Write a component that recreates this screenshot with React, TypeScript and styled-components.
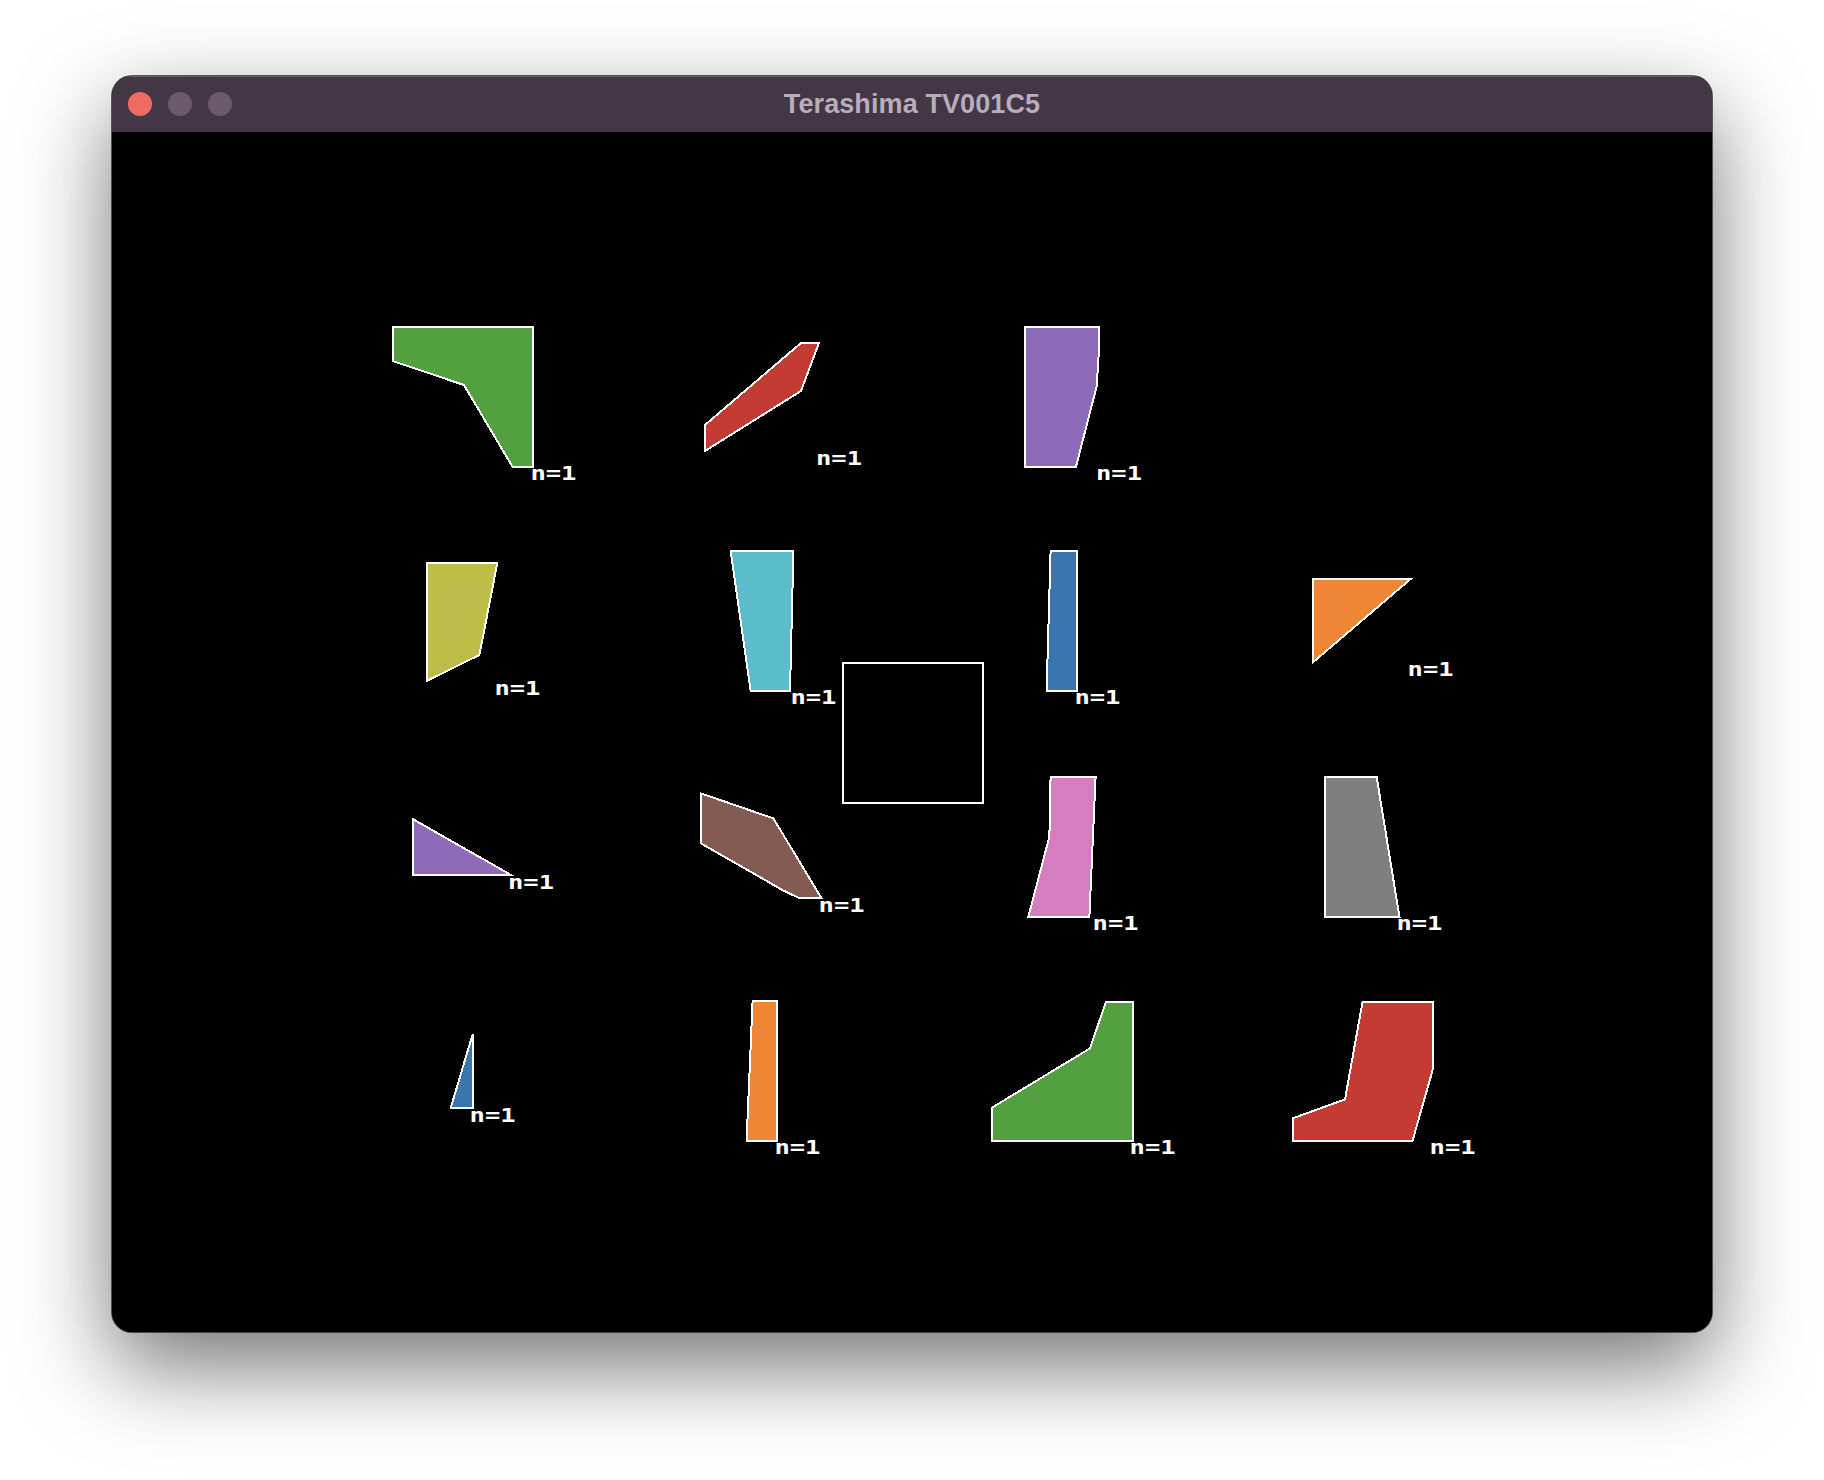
import React from "react";
import styled, { createGlobalStyle } from "styled-components";

type Pt = [number, number];

interface Piece {
  color: string;
  points: Pt[];
}

// coordinates in canvas units (800x600), drawn at 2x
const pieces: Piece[] = [
  { color: "#52a03f", points: [[140.3, 97.3], [210.7, 97.3], [210.7, 167.3], [200.2, 167.3], [176, 126.5], [140.3, 114.5]] },
  { color: "#c43b33", points: [[296.5, 146.5], [344.5, 105.5], [353.5, 105.5], [344.5, 129.5], [296.5, 159.5]] },
  { color: "#8e6bb8", points: [[456.5, 97.3], [493.5, 97.3], [493.3, 112], [492.3, 127.3], [482, 167.3], [456.5, 167.3]] },
  { color: "#bdbd47", points: [[157.3, 215.3], [192.7, 215.3], [183.7, 261.5], [157.3, 274.5]] },
  { color: "#5bbccc", points: [[309.3, 209.5], [340.7, 209.5], [339, 279.3], [319.3, 279.3]] },
  { color: "#3b75af", points: [[469.3, 209.5], [482.7, 209.5], [482.7, 279.3], [467.3, 279.3]] },
  { color: "#ef8636", points: [[600.3, 223.5], [649.3, 223.5], [600.3, 265.3]] },
  { color: "#8e6bb8", points: [[150.3, 343.5], [199.5, 371.5], [150.3, 371.5]] },
  { color: "#845b53", points: [[294.5, 330.7], [330.7, 343.2], [354.8, 383.2], [344, 383.2], [335.7, 379.3], [294.5, 355.7]] },
  { color: "#d57ebf", points: [[469.3, 322.3], [491.8, 322.3], [488.7, 392.3], [458.2, 392.3], [468.7, 352.3]] },
  { color: "#7f7f7f", points: [[606.5, 322.3], [632.3, 322.3], [643.7, 392.3], [606.5, 392.3]] },
  { color: "#3b75af", points: [[180.3, 451.2], [180.3, 488.2], [169.3, 488.2]] },
  { color: "#ef8636", points: [[320.3, 434.5], [332.7, 434.5], [332.7, 504.3], [317.3, 504.3]] },
  { color: "#52a03f", points: [[497, 434.8], [510.3, 434.8], [510.3, 504.3], [440.2, 504.3], [440.2, 487.7], [489, 458.2]] },
  { color: "#c43b33", points: [[625.3, 434.8], [660.3, 434.8], [660.3, 469], [650.3, 504.3], [590.3, 504.3], [590.3, 493.2], [616.5, 483.7]] },
];

const GlobalStyle = createGlobalStyle`
  html, body {
    margin: 0;
    padding: 0;
    background: #ffffff;
  }
`;

const Page = styled.div`
  width: 1824px;
  height: 1480px;
  box-sizing: border-box;
  padding: 76px 112px 0;
  background: #ffffff;
`;

const Window = styled.div`
  width: 1600px;
  display: flex;
  flex-direction: column;
  border-radius: 20px;
  overflow: hidden;
  background: #000;
  box-shadow: 0 0 0 1px rgba(40, 40, 40, 0.75), 0 34px 90px rgba(0, 0, 0, 0.55);
`;

const TitleBar = styled.div`
  height: 56px;
  display: grid;
  grid-template-columns: 1fr auto 1fr;
  align-items: center;
  background: #433645;
  box-shadow: inset 0 1px 0 rgba(255, 255, 255, 0.18);
`;

const Lights = styled.div`
  display: flex;
  gap: 16px;
  padding-left: 16px;
`;

const Light = styled.span<{ $color: string }>`
  width: 24px;
  height: 24px;
  border-radius: 50%;
  background: ${(p) => p.$color};
`;

const Title = styled.div`
  font-family: "Liberation Sans", Arial, sans-serif;
  font-weight: 700;
  font-size: 27px;
  color: #b9adbb;
  letter-spacing: 0.1px;
`;

const Canvas = styled.svg`
  display: block;
  width: 1600px;
  height: 1200px;
  background: #000;
`;

const Shape = styled.polygon`
  stroke: #ffffff;
  stroke-width: 1;
  stroke-linejoin: miter;
`;

const Frame = styled.rect`
  fill: none;
  stroke: #ffffff;
  stroke-width: 1;
`;

const Count = styled.text`
  fill: #ffffff;
  font-family: "DejaVu Sans Mono", "Liberation Mono", monospace;
  font-weight: 700;
  font-size: 9.4px;
`;

const PieceView = ({ piece }: { piece: Piece }) => {
  const maxX = Math.max(...piece.points.map((p) => p[0]));
  const maxY = Math.max(...piece.points.map((p) => p[1]));
  return (
    <g>
      <Shape
        fill={piece.color}
        points={piece.points.map((p) => p.join(",")).join(" ")}
        shapeRendering="crispEdges"
      />
      <Count x={maxX - 1.5} y={maxY + 6.8} textLength={23} lengthAdjust="spacingAndGlyphs">
        n=1
      </Count>
    </g>
  );
};

export default function App() {
  return (
    <>
      <GlobalStyle />
      <Page>
        <Window>
          <TitleBar>
            <Lights>
              <Light $color="#ee6b60" />
              <Light $color="#6a5a6b" />
              <Light $color="#6a5a6b" />
            </Lights>
            <Title>Terashima TV001C5</Title>
            <div />
          </TitleBar>
          <Canvas viewBox="0 0 800 600">
            <Frame x={365.3} y={265.3} width={70} height={70} shapeRendering="crispEdges" />
            {pieces.map((piece, i) => (
              <PieceView key={i} piece={piece} />
            ))}
          </Canvas>
        </Window>
      </Page>
    </>
  );
}
